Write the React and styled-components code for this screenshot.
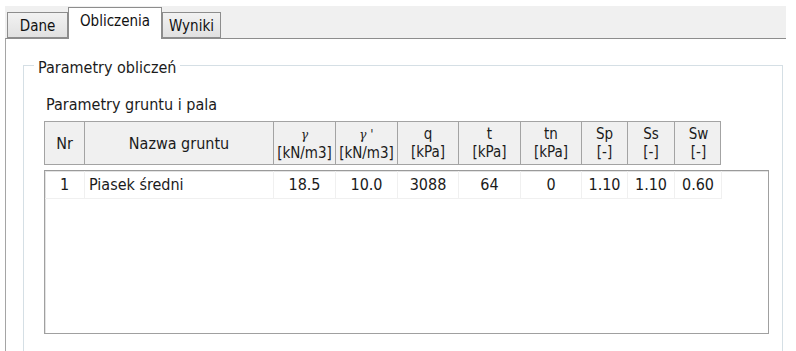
import React from "react";
import styled, { createGlobalStyle } from "styled-components";

const GlobalStyle = createGlobalStyle`
    html, body {
        margin: 0;
        padding: 0;
        background: #ffffff;
        overflow: hidden;
    }
    body {
        font-family: "DejaVu Sans Condensed", "DejaVu Sans", sans-serif;
        font-size: 16px;
        color: #1b1b1b;
    }
`;

const Window = styled.div`
    width: 781px;
    height: 345px;
    padding: 6px 0 0 5px;
    display: flex;
    flex-direction: column;
`;

const TabBar = styled.div`
    height: 32px;
    background: #f0f0f0;
    display: flex;
    align-items: flex-end;
    padding-left: 2px;
`;

const Tab = styled.div`
    box-sizing: border-box;
    width: ${p => p.w}px;
    height: ${p => (p.active ? 32 : 26)}px;
    margin-bottom: ${p => (p.active ? -1 : 0)}px;
    padding-top: 4px;
    text-align: center;
    border: 1px solid #8d8d8d;
    border-bottom: ${p => (p.active ? "none" : "1px solid #8d8d8d")};
    background: ${p => (p.active ? "#ffffff" : "linear-gradient(#f2f2f2, #e1e1e1)")};
    position: relative;
    z-index: ${p => (p.active ? 1 : 0)};
    font-size: 15px;
    line-height: 18px;
    color: #111;
`;

const Pane = styled.div`
    flex: 1;
    background: #ffffff;
    border-top: 1px solid #8d8d8d;
    border-left: 1px solid #a5a5a5;
    padding: 14px 3px 0 17px;
    display: flex;
    flex-direction: column;
`;

const Group = styled.fieldset`
    margin: 0;
    padding: 0;
    border: 1px solid #d5dfe5;
    border-bottom: none;
    flex: 1;
    min-width: 0;
`;

const Legend = styled.legend`
    margin-left: 10px;
    padding: 5px 4px 0 4px;
    font-size: 16px;
    line-height: 19px;
`;

const Body = styled.div`
    padding: 18px 0 0 20px;
`;

const Caption = styled.div`
    margin-left: 2px;
    line-height: 19px;
    margin-bottom: 7px;
`;

const cols = "40px 189px 62px 62px 61px 62px 61px 46px 47px 47px";

const Header = styled.div`
    display: grid;
    grid-template-columns: ${cols};
    width: 677px;
    height: 44px;
    box-sizing: border-box;
    border: 1px solid #a3a3a3;
    background: #f0f0f0;
`;

const HeadCell = styled.div`
    display: flex;
    flex-direction: column;
    align-items: center;
    justify-content: center;
    border-right: ${p => (p.last ? "none" : "1px solid #a3a3a3")};
    line-height: 18px;
    font-size: ${p => (p.single ? 16 : 15)}px;
    white-space: nowrap;
    padding-top: ${p => (p.single ? 2 : 0)}px;
`;

const Unit = styled.span`
    font-size: 15px;
`;

const Greek = styled.span`
    font-family: "DejaVu Serif", serif;
    font-style: italic;
    font-size: 12px;
`;

const Grid = styled.div`
    margin-top: 5px;
    width: 725px;
    height: 164px;
    box-sizing: border-box;
    border: 1px solid #a0a0a0;
    border-top-color: #9a9a9a;
    box-shadow: inset 1px 1px 0 #e3e3e3;
    background: #ffffff;
`;

const Row = styled.div`
    display: grid;
    grid-template-columns: ${cols};
    width: 677px;
    height: 28px;
`;

const Cell = styled.div`
    display: flex;
    align-items: center;
    justify-content: ${p => (p.left ? "flex-start" : "center")};
    padding-left: ${p => (p.left ? 4 : 0)}px;
    border-right: 1px solid #f0f0f0;
    border-bottom: 1px solid #f0f0f0;
    font-size: 16px;
    white-space: nowrap;
`;

const headers = [
    { top: "Nr", single: true },
    { top: "Nazwa gruntu", single: true },
    { top: <Greek>γ</Greek>, unit: "[kN/m3]" },
    { top: <Greek>γ &apos;</Greek>, unit: "[kN/m3]" },
    { top: "q", unit: "[kPa]" },
    { top: "t", unit: "[kPa]" },
    { top: "tn", unit: "[kPa]" },
    { top: "Sp", unit: "[-]" },
    { top: "Ss", unit: "[-]" },
    { top: "Sw", unit: "[-]" },
];

const rows = [
    ["1", "Piasek średni", "18.5", "10.0", "3088", "64", "0", "1.10", "1.10", "0.60"],
];

const App = () => (
    <>
        <GlobalStyle />
        <Window>
            <TabBar>
                <Tab w={61}>Dane</Tab>
                <Tab w={94} active>Obliczenia</Tab>
                <Tab w={59}>Wyniki</Tab>
            </TabBar>
            <Pane>
                <Group>
                    <Legend>Parametry obliczeń</Legend>
                    <Body>
                        <Caption>Parametry gruntu i pala</Caption>
                        <Header>
                            {headers.map((h, i) => (
                                <HeadCell key={i} single={h.single} last={i === headers.length - 1}>
                                    <span>{h.top}</span>
                                    {h.unit && <Unit>{h.unit}</Unit>}
                                </HeadCell>
                            ))}
                        </Header>
                        <Grid>
                            {rows.map((r, i) => (
                                <Row key={i}>
                                    {r.map((v, j) => (
                                        <Cell key={j} left={j === 1}>{v}</Cell>
                                    ))}
                                </Row>
                            ))}
                        </Grid>
                    </Body>
                </Group>
            </Pane>
        </Window>
    </>
);

export default App;
